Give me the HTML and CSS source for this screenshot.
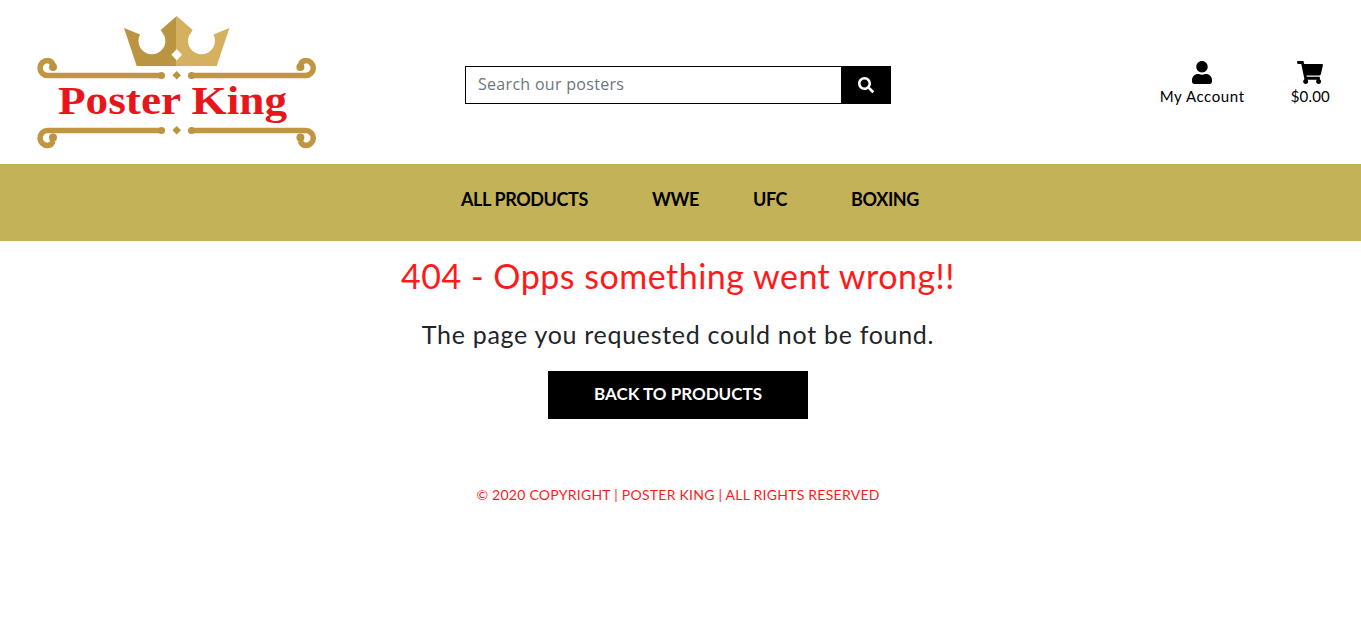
FILE: index.html
```html
<!DOCTYPE html>
<html lang="en">
<head>
    <meta charset="UTF-8">
    <meta name="viewport" content="width=device-width, initial-scale=1.0">
    <title>Poster King</title>
    <link rel="stylesheet" href="styles.css">
</head>
<body>
    <header class="site-header">
        <a class="logo" href="#">
            <svg class="logo-img" viewBox="37 17 280 133" xmlns="http://www.w3.org/2000/svg">
                <path class="gold-dark" d="M124 29L140 35.5A13.500 13.500 0 1 0 164.500 37L160.700 31L176.700 17V67H136.700Z"></path>
                <path class="gold-light" d="M229.400 29L213.400 35.500A13.500 13.500 0 1 1 188.900 37L192.700 31L176.700 17V67H216.700Z"></path>
                <path class="logo-white" d="M176.700 50L182 55.700L176.700 61.500L171.400 55.700Z"></path>
                <g class="scroll">
                    <path d="M161 76.500H47.500A7.500 7.500 0 0 1 47.500 61.500A6 6 0 0 1 53 66"></path>
                    <path d="M192 76.500H305.800A7.500 7.500 0 0 0 305.800 61.500A6 6 0 0 0 300.400 66"></path>
                    <path d="M161 131.500H47.500A7.500 7.500 0 0 0 47.500 146.500A6 6 0 0 0 53 142"></path>
                    <path d="M192 131.500H305.800A7.500 7.500 0 0 1 305.800 146.500A6 6 0 0 1 300.400 142"></path>
                </g>
                <g class="gold-dark">
                    <circle cx="53" cy="68" r="4"></circle>
                    <circle cx="300.400" cy="68" r="4"></circle>
                    <circle cx="53" cy="138.500" r="4"></circle>
                    <circle cx="300.400" cy="138.500" r="4"></circle>
                    <circle cx="161.500" cy="76.500" r="3.500"></circle>
                    <circle cx="191.500" cy="76.500" r="3.500"></circle>
                    <circle cx="161.500" cy="131.500" r="3.500"></circle>
                    <circle cx="191.500" cy="131.500" r="3.500"></circle>
                    <path d="M176.700 72L181 76.300L176.700 80.600L172.400 76.300Z"></path>
                    <path d="M176.700 127L181 131.300L176.700 135.600L172.400 131.300Z"></path>
                </g>
                <text class="logo-text" x="58" y="115" textLength="229" lengthAdjust="spacingAndGlyphs">Poster King</text>
            </svg>
        </a>
        <form class="search-bar">
            <input class="search-input" type="text" placeholder="Search our posters">
            <button class="search-btn" type="button">
                <svg class="icon-search" viewBox="0 0 512 512" xmlns="http://www.w3.org/2000/svg">
                    <path d="M505 442.700L405.300 343c-4.500-4.500-10.600-7-17-7H372c27.600-35.300 44-79.700 44-128C416 93.100 322.900 0 208 0S0 93.100 0 208s93.100 208 208 208c48.300 0 92.700-16.400 128-44v16.300c0 6.400 2.500 12.500 7 17l99.700 99.700c9.400 9.400 24.600 9.400 33.900 0l28.300-28.300c9.400-9.400 9.400-24.600.1-34zM208 336c-70.700 0-128-57.200-128-128 0-70.700 57.200-128 128-128 70.700 0 128 57.200 128 128 0 70.700-57.200 128-128 128z"></path>
                </svg>
            </button>
        </form>
        <div class="account-links">
            <a class="account-link" href="#">
                <svg class="icon-user" viewBox="0 0 448 512" xmlns="http://www.w3.org/2000/svg">
                    <path d="M224 256c70.700 0 128-57.300 128-128S294.700 0 224 0 96 57.300 96 128s57.300 128 128 128zm89.600 32h-16.700c-22.200 10.200-46.900 16-72.900 16s-50.600-5.800-72.900-16h-16.700C60.200 288 0 348.200 0 422.400V464c0 26.500 21.500 48 48 48h352c26.500 0 48-21.500 48-48v-41.600c0-74.200-60.200-134.400-134.400-134.400z"></path>
                </svg>
                <span>My Account</span>
            </a>
            <a class="account-link cart-link" href="#">
                <svg class="icon-cart" viewBox="0 0 576 512" xmlns="http://www.w3.org/2000/svg">
                    <path d="M528.120 301.319l47.273-208C578.806 78.301 567.391 67 552 67H159.280l-9.166-44.810C147.836 10.148 137.381 0 125.120 0H24C10.745 0 0 10.745 0 24v16c0 13.255 10.745 24 24 24h69.883l70.248 343.435C147.325 417.100 136 435.222 136 456c0 30.928 25.072 56 56 56s56-25.072 56-56c0-15.674-6.447-29.835-16.824-40h209.647C430.447 426.165 424 440.326 424 456c0 30.928 25.072 56 56 56s56-25.072 56-56c0-22.172-12.888-41.332-31.579-50.405l5.517-24.276c3.413-15.018-8.002-29.319-23.403-29.319H218.117l-6.545-32h293.145c11.206 0 20.920-7.754 23.403-18.681z"></path>
                </svg>
                <span>$0.00</span>
            </a>
        </div>
    </header>

    <nav class="main-nav">
        <a href="#">All Products</a>
        <a class="nav-short" href="#">WWE</a>
        <a href="#">UFC</a>
        <a href="#">Boxing</a>
    </nav>

    <main class="error-page">
        <h1>404 - Opps something went wrong!!</h1>
        <p>The page you requested could not be found.</p>
        <a class="back-btn" href="#">Back to Products</a>
    </main>

    <footer class="site-footer">
        &copy; 2020 Copyright | Poster King | All Rights Reserved
    </footer>
</body>
</html>
```
FILE: styles.css
```css
:root {
    --gold: #c4b258;
    --logo-dark: #bb9441;
    --logo-light: #d5b05f;
    --red: #ff1a1a;
}

* {
    margin: 0;
    padding: 0;
    box-sizing: border-box;
}

body {
    background-color: #fff;
    color: #212529;
    font-family: "Lato", sans-serif;
}

a {
    color: inherit;
    text-decoration: none;
}

.site-header {
    display: grid;
    grid-template-columns: 428px 426px 1fr;
    align-items: center;
    height: 164px;
    padding: 0 31px 0 37px;
}

.logo {
    display: block;
}

.logo-img {
    display: block;
    width: 280px;
    height: 133px;
}

.gold-dark {
    fill: var(--logo-dark);
}

.gold-light {
    fill: var(--logo-light);
}

.logo-white {
    fill: #fff;
}

.scroll path {
    fill: none;
    stroke: #c09640;
    stroke-width: 5.5;
}

.logo-text {
    fill: #e8161b;
    font-family: "Liberation Serif", serif;
    font-weight: 700;
    font-size: 40px;
}

.search-bar {
    display: flex;
    height: 38px;
    margin-top: 6px;
}

.search-input {
    flex: 1;
    min-width: 0;
    padding: 0 12px 2px;
    border: 1px solid #000;
    border-right: none;
    border-radius: 0;
    outline: none;
    font-family: "Open Sans", sans-serif;
    font-size: 16px;
    letter-spacing: 0.3px;
}

.search-input::placeholder {
    color: #6c757d;
}

.search-btn {
    display: flex;
    justify-content: center;
    align-items: center;
    width: 50px;
    background-color: #000;
    border: none;
}

.icon-search {
    width: 16px;
    height: 16px;
    fill: #fff;
}

.account-links {
    display: flex;
    justify-self: end;
    gap: 46px;
    margin-top: 1px;
}

.account-link {
    display: flex;
    flex-direction: column;
    align-items: center;
    gap: 3px;
    color: #000;
    font-size: 15px;
    letter-spacing: 0.6px;
    line-height: 18px;
}

.cart-link {
    letter-spacing: 0.2px;
}

.icon-user {
    width: 20px;
    height: 23px;
}

.icon-cart {
    width: 26px;
    height: 23px;
}

.main-nav {
    display: flex;
    justify-content: center;
    gap: 64px;
    height: 77px;
    padding: 0 0 7px 19px;
    align-items: center;
    background-color: var(--gold);
    color: #000;
    font-size: 18px;
    font-weight: 700;
    letter-spacing: -0.4px;
    text-transform: uppercase;
}

.nav-short {
    margin-right: -10px;
}

.error-page {
    display: flex;
    flex-direction: column;
    align-items: center;
    margin-right: 5px;
    padding-top: 15px;
}

.error-page h1 {
    color: var(--red);
    font-size: 34px;
    font-weight: 400;
    letter-spacing: 0.5px;
    line-height: 40px;
    margin-bottom: 20px;
}

.error-page p {
    font-size: 25px;
    letter-spacing: 0.7px;
    line-height: 36px;
    margin-bottom: 19px;
}

.back-btn {
    width: 260px;
    height: 48px;
    background-color: #000;
    color: #fff;
    font-size: 17px;
    font-weight: 700;
    line-height: 46px;
    text-align: center;
    text-transform: uppercase;
}

.site-footer {
    margin-top: 66px;
    margin-right: 5px;
    color: var(--red);
    font-size: 14px;
    letter-spacing: 0.25px;
    line-height: 20px;
    text-align: center;
    text-transform: uppercase;
}
```
